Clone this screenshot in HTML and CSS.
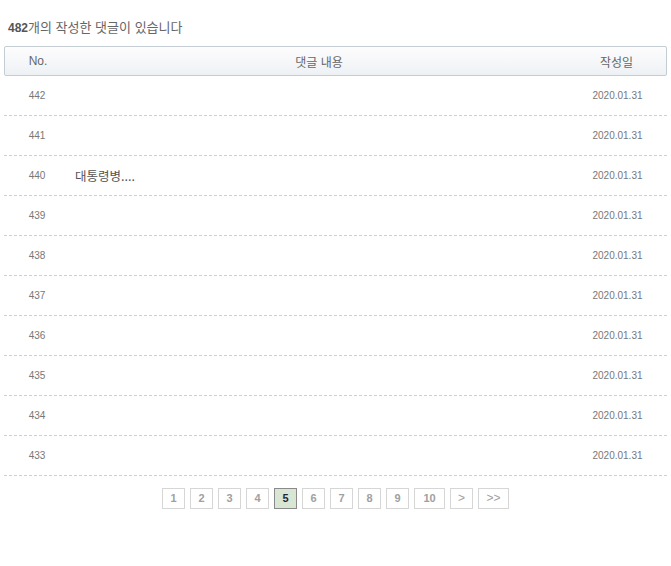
FILE: index.html
```html
<!DOCTYPE html>
<html lang="ko">
<head>
<meta charset="UTF-8">
<title>내 댓글</title>
<link rel="stylesheet" href="styles.css">
</head>
<body>
<div class="wrap">
  <p class="summary"><b>482</b>개의 작성한 댓글이 있습니다</p>

  <div class="list-head">
    <span class="col-no">No.</span>
    <span class="col-text">댓글 내용</span>
    <span class="col-date">작성일</span>
  </div>

  <ul class="comments">
    <li><span class="col-no">442</span><span class="col-text"></span><span class="col-date">2020.01.31</span></li>
    <li><span class="col-no">441</span><span class="col-text"></span><span class="col-date">2020.01.31</span></li>
    <li><span class="col-no">440</span><span class="col-text">대통령병....</span><span class="col-date">2020.01.31</span></li>
    <li><span class="col-no">439</span><span class="col-text"></span><span class="col-date">2020.01.31</span></li>
    <li><span class="col-no">438</span><span class="col-text"></span><span class="col-date">2020.01.31</span></li>
    <li><span class="col-no">437</span><span class="col-text"></span><span class="col-date">2020.01.31</span></li>
    <li><span class="col-no">436</span><span class="col-text"></span><span class="col-date">2020.01.31</span></li>
    <li><span class="col-no">435</span><span class="col-text"></span><span class="col-date">2020.01.31</span></li>
    <li><span class="col-no">434</span><span class="col-text"></span><span class="col-date">2020.01.31</span></li>
    <li><span class="col-no">433</span><span class="col-text"></span><span class="col-date">2020.01.31</span></li>
  </ul>

  <div class="paging">
    <a href="#">1</a>
    <a href="#">2</a>
    <a href="#">3</a>
    <a href="#">4</a>
    <a href="#" class="on">5</a>
    <a href="#">6</a>
    <a href="#">7</a>
    <a href="#">8</a>
    <a href="#">9</a>
    <a href="#" class="wide">10</a>
    <a href="#" class="arrow">&gt;</a>
    <a href="#" class="wide arrow">&gt;&gt;</a>
  </div>
</div>
</body>
</html>
```

FILE: styles.css
```css
body {
  margin: 0;
  padding: 0;
  background: #fff;
  font-family: "Noto Sans CJK KR", "Liberation Sans", sans-serif;
  color: #555;
}

.wrap {
  padding: 0 4px;
}

.summary {
  margin: 0;
  padding: 19px 4px 0;
  height: 27px;
  font-size: 13px;
  line-height: 16px;
  color: #666;
}

.summary b {
  font-family: "Liberation Sans", sans-serif;
  font-size: 12px;
  color: #555;
}

.list-head {
  display: flex;
  align-items: center;
  height: 28px;
  border: 1px solid #c4cdd4;
  border-radius: 2px;
  background: linear-gradient(to bottom, #fdfdfe, #eef1f4);
  font-size: 12px;
  color: #666;
}

.col-no {
  width: 66px;
  text-align: center;
}

.col-text {
  flex: 1;
  text-align: center;
}

.col-date {
  width: 99px;
  text-align: center;
}

.list-head .col-no {
  font-family: "Liberation Sans", sans-serif;
}

.comments {
  list-style: none;
  margin: 0;
  padding: 0;
}

.comments li {
  display: flex;
  align-items: center;
  height: 39px;
  border-bottom: 1px dashed #cfcfcf;
}

.comments .col-no,
.comments .col-date {
  font-family: "Liberation Sans", sans-serif;
  font-size: 10px;
  color: #777;
}

.comments .col-text {
  text-align: left;
  padding-left: 5px;
  font-size: 12.5px;
  color: #555;
}

.paging {
  display: flex;
  justify-content: center;
  gap: 5px;
  padding-top: 12px;
}

.paging a {
  display: block;
  width: 21px;
  height: 19px;
  line-height: 19px;
  border: 1px solid #d6d6d6;
  text-align: center;
  font-family: "Liberation Sans", sans-serif;
  font-size: 11px;
  font-weight: bold;
  color: #a0a0a0;
  text-decoration: none;
}

.paging a.wide {
  width: 29px;
}

.paging a.arrow {
  font-weight: normal;
  font-size: 12px;
}

.paging a.on {
  background: #d9e6d3;
  border-color: #8a8a8a;
  color: #1e2a3a;
}
```
